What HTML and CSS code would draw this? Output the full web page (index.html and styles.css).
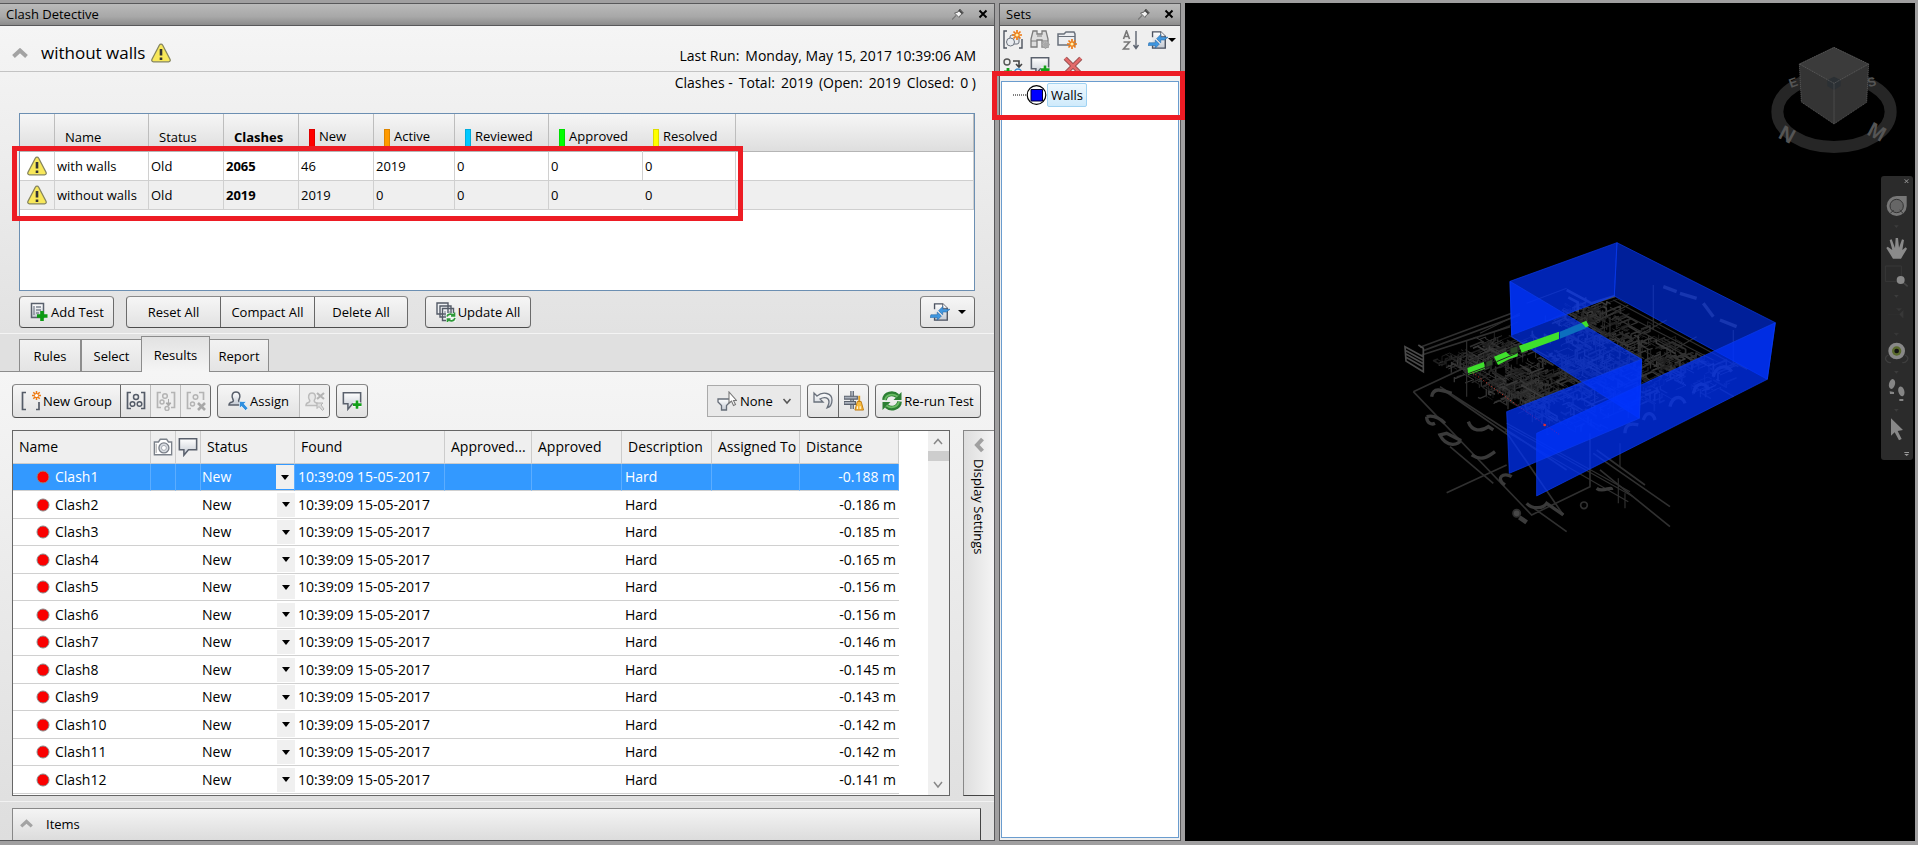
FILE: index.html
```
<!DOCTYPE html>
<html lang="en">
<head>
<meta charset="utf-8">
<title>Clash Detective</title>
<link rel="stylesheet" href="styles.css">
</head>
<body>
<svg class="defs" aria-hidden="true">
  <defs>
    <linearGradient id="steel" x1="0" y1="0" x2="0" y2="1"><stop offset="0" stop-color="#fff"/><stop offset="1" stop-color="#c3c9d2"/></linearGradient>
    <symbol id="warn" viewBox="0 0 20 20"><path d="M10 1.200c.8 0 1.300.4 1.700 1.100l7.300 14c.6 1.300 0 2.500-1.400 2.500H2.400C1 18.800.4 17.600 1 16.300l7.300-14C8.700 1.600 9.200 1.200 10 1.200z" fill="#f8e85a" stroke="#85855f" stroke-width="1.300"/><path d="M10 6v6.500M10 14.500v2.500" stroke="#333" stroke-width="2.600"/></symbol>
    <symbol id="pin" viewBox="0 0 12 12"><path d="M0 11.500l4-4" stroke="#777" stroke-width="1.200"/><path d="M2.500 5l4.500 4.500 1.500-2.500 3-2L8 1 6 4z" fill="#f2f2f2" stroke="#666"/><path d="M7 2l3.500 3.500" stroke="#444" stroke-width="1.800"/></symbol>
    <symbol id="close" viewBox="0 0 10 10"><path d="M1.500 1.500l7 7M8.500 1.500l-7 7" stroke="#000" stroke-width="1.900"/></symbol>
    <symbol id="up" viewBox="0 0 16 10"><path d="M1.500 8.500L8 2.500l6.500 6" fill="none" stroke="#a3a3a3" stroke-width="4"/></symbol>
    <symbol id="export" viewBox="0 0 22 22"><path d="M5 8V2h9l5 5v13H5v-3" fill="url(#steel)" stroke="#4b5260" stroke-width="1.500"/><path d="M14 2v5h5" fill="#fff" stroke="#4b5260"/><path d="M22 8h-8V5l-4.500 4.500L14 14v-3h4zM1 14h7v-3l4.500 4.500L8 20v-3H0z" fill="#3f97e0" stroke="#1c62a5" stroke-width=".6"/></symbol>
    <symbol id="addtest" viewBox="0 0 18 20"><path d="M1.500 1.500h12v14h-12z" fill="url(#steel)" stroke="#59606c" stroke-width="1.500"/><path d="M4 4v9M6 5h5M6 8h5M6 11h3" stroke="#7d8591" stroke-width="1.300"/><path d="M12 9v10M7 14h10.500" stroke="#0c9a12" stroke-width="3.600"/></symbol>
    <symbol id="updateall" viewBox="0 0 20 20"><path d="M1 1h11v11H1zM4 4h11v11H4zM6.500 6.500h11v12h-11z" fill="#eef0f3" stroke="#545b67" stroke-width="1.400"/><path d="M9 9v7M11 10h5" stroke="#7d8591"/><path d="M10 11h10v9H10z" fill="#f2f4f2"/><path d="M11 14.500c1-3 5-3 7-1M19 16c-1 3.500-5 3.500-7 1.500M18.500 10.500v3.500h-3.500M11.500 20v-3h3" fill="none" stroke="#2d9938" stroke-width="1.700"/></symbol>
    <symbol id="newgroup" viewBox="0 0 20 20"><path d="M5 1.500H1.500v17H5M15 18.500h3V11" fill="none" stroke="#555c68" stroke-width="1.700"/><path d="M15.500 0v9M11 4.500h9M12.300 1.300l6.400 6.400M18.700 1.300l-6.400 6.400" stroke="#ee7a12" stroke-width="1.500"/><circle cx="15.500" cy="4.500" r="1.600" fill="#fff"/></symbol>
    <symbol id="group" viewBox="0 0 20 20"><path d="M5 1.500H1.500v16H5M15 1.500h3.500v16H15" fill="none" stroke="#555c68" stroke-width="1.700"/><g fill="#eee" stroke="#555c68" stroke-width="1.500"><circle cx="10" cy="6" r="2.500"/><circle cx="6.500" cy="13" r="2.300"/><circle cx="13.500" cy="13" r="2.300"/></g></symbol>
    <symbol id="ungroup" viewBox="0 0 20 20"><path d="M5 1.500H1.500v15H5M15 1.500h3.500v15H15" fill="none" stroke="#b4b4b4" stroke-width="1.700"/><g fill="#eee" stroke="#b4b4b4" stroke-width="1.500"><circle cx="9" cy="5" r="2.300"/><circle cx="6" cy="11" r="2"/><circle cx="11" cy="17.500" r="2"/></g><path d="M12.500 8v5M10 12h5l-2.500 3z" fill="#aaa" stroke="#aaa"/></symbol>
    <symbol id="groupx" viewBox="0 0 20 20"><path d="M5 1.500H1.500v16H5M13 1.500h4.500V9" fill="none" stroke="#b4b4b4" stroke-width="1.700"/><g fill="#eee" stroke="#b4b4b4" stroke-width="1.500"><circle cx="9.500" cy="6" r="2.300"/><circle cx="6.500" cy="13" r="2"/></g><path d="M12 12l7 7M19 12l-7 7" stroke="#a8a8a8" stroke-width="2.600"/></symbol>
    <symbol id="assign" viewBox="0 0 20 20"><path d="M8 1c4.500 0 4.500 5 3 7.500-.7 1-.5 2 1 2.500 2 .5 3 1.500 3 3H1c0-2 1-2.500 3-3 1.500-.5 1.700-1.500 1-2.500C3.500 6 3.500 1 8 1z" fill="url(#steel)" stroke="#59606c" stroke-width="1.500"/><path d="M11.500 10.500h7l-2.500 2.300 4 4.500-2.500 2.300-4-4.300-2 2z" fill="#2f8fdf" stroke="#fff" stroke-width=".6"/></symbol>
    <symbol id="unassign" viewBox="0 0 20 20"><path d="M7 2c4 0 4 5 2.500 7-.7 1 0 2 1 2.500 2 .5 2.500 1 2.500 3H1c0-2 .5-2.500 2.500-3 1-.5 1.700-1.500 1-2.500C3 7 3 2 7 2z" fill="#e8e8e8" stroke="#bcbcbc" stroke-width="1.500"/><path d="M12 2l7 6M19 2l-7 6" stroke="#b4b4b4" stroke-width="2.200"/><path d="M12 12h6l-2 2 3 4-1.500 1.500-3.500-4-2 2z" fill="#ddd" stroke="#b4b4b4"/></symbol>
    <symbol id="comment" viewBox="0 0 22 22"><path d="M1.500 2h19v12h-9l-5 6v-6h-5z" fill="url(#steel)" stroke="#5a616d" stroke-width="1.700"/></symbol>
    <symbol id="commentadd" viewBox="0 0 22 22"><use href="#comment"/><path d="M16.500 10.500v9M12 15h9.500" stroke="#fff" stroke-width="4.500"/><path d="M16.500 10.500v9M12 15h9.500" stroke="#14a01a" stroke-width="3"/></symbol>
    <symbol id="camera" viewBox="0 0 22 20"><path d="M1.500 4.500H6L8 1.500h7l2 3h3.500v14h-19z" fill="#fff" stroke="#7b818a" stroke-width="1.500"/><path d="M3.500 6.500v10" stroke="#999"/><circle cx="12" cy="11" r="5.500" fill="#d8dce1" stroke="#7b818a" stroke-width="1.500"/><circle cx="12" cy="11" r="2.700" fill="#fff" stroke="#a0a5ac"/></symbol>
    <symbol id="funnel" viewBox="0 0 20 20"><path d="M1 8h12v3l-3.500 3.500V19h-5v-4.500L1 11z" fill="url(#steel)" stroke="#666d78" stroke-width="1.300"/><path d="M12 1v11l2.500-2 2 4.500 2-1-2-4h3z" fill="#fff" stroke="#777" stroke-width="1.100"/></symbol>
    <symbol id="undo" viewBox="0 0 20 20"><path d="M1 2v9h9L7 8c5-3 9-1 9 3 0 2-1 4-2 6 3-1 5-4 5-8C19 2 10 0 4 5z" fill="url(#steel)" stroke="#6a717c" stroke-width="1.300"/></symbol>
    <symbol id="compact" viewBox="0 0 21 21"><path d="M8.500 0v19" stroke="#6a717c" stroke-width="4"/><path d="M8.500 0v19" stroke="#b8bec8" stroke-width="1.500"/><path d="M0 5.500h14v3H0zM0 11h12v3H0z" fill="#aab1bc" stroke="#59606c" stroke-width="1.200"/><path d="M16 5v7" stroke="#dd9b22" stroke-width="2"/><path d="M14 11h4l2.500 9h-9z" fill="#f7ba3e" stroke="#c27c10"/><path d="M14 19v-3M17 19v-3" stroke="#fff"/></symbol>
    <symbol id="rerun" viewBox="0 0 20 20"><path d="M2.500 9C3 2.500 11 1 15.500 5M17.500 10.500C17 17 9 19 4.500 15" fill="none" stroke="#2d7f34" stroke-width="4.800"/><path d="M19.500 1v8h-8zM.5 19v-8h8z" fill="#2d7f34"/><path d="M3 9C4 3.500 11 2 15.500 5.500M17 10.500C16 16 9 18 4.500 14.500" fill="none" stroke="#69bb64" stroke-width="1.800"/></symbol>
    <symbol id="star" viewBox="0 0 10 10"><path d="M5 0v10M0 5h10M1.500 1.500l7 7M8.500 1.500l-7 7" stroke="#ee7a12" stroke-width="1.700"/><circle cx="5" cy="5" r="1.600" fill="#fff3b0"/></symbol>
    <symbol id="newset" viewBox="0 0 20 20"><path d="M4 1H1v17h3M16 18h3V9" fill="none" stroke="#4f5560" stroke-width="1.400"/><rect x="7" y="5" width="9" height="9" rx="2" fill="#e9ecf0" stroke="#6a717c"/><circle cx="7.500" cy="12" r="4" fill="#e9ecf0" stroke="#6a717c"/><use href="#star" x="9" y="0" width="10" height="10"/></symbol>
    <symbol id="find" viewBox="0 0 20 20"><path d="M3 1h4v3h5V1h4l2 8v8h-6v-7H7v7H1V9z" fill="#ddd" stroke="#7c7c7c" stroke-width="1.300"/><path d="M1 11h6M12 11h6M7 6h5" stroke="#7c7c7c"/><path d="M15.500 10v9M11 14.500h9M12.500 11.500l6 6M18.500 11.500l-6 6" stroke="#aaa" stroke-width="1.500"/></symbol>
    <symbol id="folder" viewBox="0 0 20 20"><path d="M1 4h6l2-2h8l1 2v11H1z" fill="#eceef1" stroke="#6a717c" stroke-width="1.500"/><path d="M1 6.500h17" stroke="#6a717c"/><use href="#star" x="10" y="9" width="10" height="10"/></symbol>
    <symbol id="dup" viewBox="0 0 20 16"><circle cx="4" cy="4" r="3" fill="#eee" stroke="#555" stroke-width="1.400"/><path d="M10 3h6v5M13 6l3 3 3-3" fill="none" stroke="#444" stroke-width="1.600"/><path d="M5 10v7M1 14h8" stroke="#14a01a" stroke-width="2.800"/><circle cx="15" cy="14.500" r="3.500" fill="#eee" stroke="#3d8fd0" stroke-width="1.500"/></symbol>
    <symbol id="del" viewBox="0 0 18 18"><path d="M2 2l14 14M16 2L2 16" stroke="#8e4747" stroke-width="4"/><path d="M2 2l14 14M16 2L2 16" stroke="#e26a6a" stroke-width="2.400"/></symbol>
    <symbol id="sort" viewBox="0 0 18 20"><path d="M1.500 9l3-8 3 8M2.500 6.500h4M1.500 12h6l-6 7h6" fill="none" stroke="#777" stroke-width="1.600"/><path d="M14 1v17M11.500 15l2.500 3.500 2.500-3.500" fill="none" stroke="#5d6470" stroke-width="1.400"/></symbol>
    <symbol id="dot" viewBox="0 0 14 14"><circle cx="7" cy="7" r="6" fill="#fa0000" stroke="#888" stroke-width="1"/></symbol>
  </defs>
</svg>

<main class="app">
  <section class="panel clash">
    <header class="title"><h1>Clash Detective</h1><button aria-label="Pin"><svg class="i12"><use href="#pin"/></svg></button><button aria-label="Close"><svg class="i10"><use href="#close"/></svg></button></header>

    <div class="upper">
      <div class="test-head">
        <button class="fold" aria-label="Collapse"><svg class="chev"><use href="#up"/></svg></button>
        <h2>without walls</h2><svg class="i20"><use href="#warn"/></svg>
        <p class="last-run"><span>Last Run:</span><span>Monday, May 15, 2017 10:39:06 AM</span></p>
      </div>
      <p class="totals"><span>Clashes -</span><span>Total:</span><span>2019</span><span>(Open:</span><span>2019</span><span>Closed:</span><span>0 )</span></p>

      <div class="tests">
        <table>
          <colgroup><col class="c35"><col class="c94"><col class="c75"><col class="c75"><col class="c75"><col class="c81"><col class="c94"><col class="c94"><col class="c93"><col></colgroup>
          <thead><tr><th></th><th>Name</th><th>Status</th><th><b>Clashes</b></th><th><i class="sw red"></i>New</th><th><i class="sw orange"></i>Active</th><th><i class="sw cyan"></i>Reviewed</th><th class="open"><i class="sw green"></i>Approved</th><th><i class="sw yellow"></i>Resolved</th><th></th></tr></thead>
          <tbody>
            <tr><td><svg class="i20"><use href="#warn"/></svg></td><td>with walls</td><td>Old</td><td><b>2065</b></td><td>46</td><td>2019</td><td>0</td><td>0</td><td>0</td><td></td></tr>
            <tr><td><svg class="i20"><use href="#warn"/></svg></td><td>without walls</td><td>Old</td><td><b>2019</b></td><td>2019</td><td>0</td><td>0</td><td class="open">0</td><td>0</td><td></td></tr>
          </tbody>
        </table>
        <div class="mark mark-tests"></div>
      </div>

      <div class="actions">
        <div class="seg"><button class="w93"><svg class="i20"><use href="#addtest"/></svg>Add Test</button></div>
        <div class="seg"><button class="w93">Reset All</button><button class="w94">Compact All</button><button class="w93">Delete All</button></div>
        <div class="seg after"><button class="w104"><svg class="i20"><use href="#updateall"/></svg>Update All</button></div>
        <div class="seg end"><button class="w53" aria-label="Import or export"><svg class="i20"><use href="#export"/></svg><i class="tri"></i></button></div>
      </div>
    </div>

    <nav class="tabs"><button class="w62">Rules</button><button class="w61">Select</button><button class="w69 on">Results</button><button class="w60">Report</button></nav>

    <div class="lower">
      <div class="tools">
        <div class="seg"><button class="w107"><svg class="i20"><use href="#newgroup"/></svg>New Group</button><button class="w30" aria-label="Group"><svg class="i20"><use href="#group"/></svg></button><button class="w30" disabled aria-label="Remove from group"><svg class="i20"><use href="#ungroup"/></svg></button><button class="w30" disabled aria-label="Explode group"><svg class="i20"><use href="#groupx"/></svg></button></div>
        <div class="seg"><button class="w81"><svg class="i20"><use href="#assign"/></svg>Assign</button><button class="w30" disabled aria-label="Unassign"><svg class="i20"><use href="#unassign"/></svg></button></div>
        <div class="seg"><button class="w30" aria-label="Add comment"><svg class="i20"><use href="#commentadd"/></svg></button></div>
        <label class="combo"><svg class="i20"><use href="#funnel"/></svg><select aria-label="Filter by selection"><option>None</option></select><svg class="i10" viewBox="0 0 10 10"><path d="M1.500 3L5 7l3.500-4" fill="none" stroke="#555" stroke-width="1.500"/></svg></label>
        <div class="seg"><button class="w30" aria-label="Reset"><svg class="i20"><use href="#undo"/></svg></button><button class="w30" aria-label="Compact"><svg class="i20"><use href="#compact"/></svg></button></div>
        <div class="seg"><button class="w104"><svg class="i20"><use href="#rerun"/></svg>Re-run Test</button></div>
      </div>

      <div class="results">
        <div class="grid">
          <table>
            <colgroup><col class="c138"><col class="c25"><col class="c25"><col class="c94"><col class="c150"><col class="c87"><col class="c90"><col class="c90"><col class="c88"><col class="c99"></colgroup>
            <thead><tr><th>Name</th><th class="ic"><svg class="i20"><use href="#camera"/></svg></th><th class="ic"><svg class="i20"><use href="#comment"/></svg></th><th>Status</th><th>Found</th><th>Approved...</th><th>Approved</th><th>Description</th><th>Assigned To</th><th>Distance</th></tr></thead>
            <tbody id="rows"></tbody>
          </table>
          <div class="scroll"><svg class="i20" viewBox="0 0 20 20"><path d="M6 13l4-4.500 4 4.500" fill="none" stroke="#888" stroke-width="1.500"/></svg><i></i><svg class="i20 down" viewBox="0 0 20 20"><path d="M6 7l4 5 4-5" fill="none" stroke="#888" stroke-width="1.500"/></svg></div>
        </div>
        <button class="display"><svg class="left" viewBox="0 0 10 16"><path d="M8.500 2L3 8l5.500 6" fill="none" stroke="#a0a0a0" stroke-width="4"/></svg><span>Display Settings</span></button>
      </div>
      <hr>
      <button class="items"><svg class="chev12"><use href="#up"/></svg>Items</button>
    </div>
  </section>

  <section class="panel sets">
    <header class="title"><h1>Sets</h1><button aria-label="Pin"><svg class="i12"><use href="#pin"/></svg></button><button aria-label="Close"><svg class="i10"><use href="#close"/></svg></button></header>
    <div class="set-tools">
      <button aria-label="Save selection"><svg class="i20"><use href="#newset"/></svg></button><button aria-label="Save search"><svg class="i20"><use href="#find"/></svg></button><button aria-label="New folder"><svg class="i20"><use href="#folder"/></svg></button><button class="push" aria-label="Sort"><svg class="i20"><use href="#sort"/></svg></button><button aria-label="Import or export"><svg class="i20"><use href="#export"/></svg><i class="tri"></i></button>
    </div>
    <div class="set-tools second">
      <button aria-label="Duplicate"><svg class="i20"><use href="#dup"/></svg></button><button aria-label="Add comment"><svg class="i20"><use href="#commentadd"/></svg></button><button class="gap" aria-label="Delete"><svg class="i20"><use href="#del"/></svg></button>
    </div>
    <div class="tree"><button class="node"><svg class="leaf" viewBox="0 0 34 20"><path d="M0 10h14" stroke="#000" stroke-dasharray="1 1"/><circle cx="23.500" cy="10" r="9.300" fill="#fff" stroke="#000" stroke-width="1.200"/><path d="M18 4.500h11.500v11.500H18z" fill="#00f" stroke="#003"/></svg><span>Walls</span></button></div>
    <div class="mark mark-sets"></div>
  </section>

  <section class="view">
    <svg class="scene" viewBox="0 0 730 838" preserveAspectRatio="xMidYMin meet">
      <g transform="translate(195 217) scale(.3333)">
        <g id="pipes" fill="none" stroke-linejoin="round"></g>
        <g fill="none" stroke="#303030" stroke-width="5">
          <path d="M100 515L260 440M100 515L455 885L630 800V640M120 382L395 280M130 392L420 285M125 405L390 320M200 818L380 735M455 860L560 935M640 700L870 860M660 750L870 920M650 690L795 795M210 680L340 790M180 500L380 630L560 750M190 510L385 645L550 885" />
          <path d="M385 620L760 830M375 632L745 845M380 610L750 815M260 360V530M455 460V510M820 195V330M690 290V360M720 670V740M715 775V850M735 820V865M300 340L420 280M440 250L560 205M700 240L1075 440M690 262L1000 420M700 290L960 430M745 255L600 330M860 300L640 420M950 350L790 440M1060 330V440" stroke-width="3.500"/>
          <path d="M75 380l55 30v45l-52-32zM78 392l50 28M78 402l50 28M78 412l50 28M115 375l15 10v30" stroke="#4a4a4a"/>
          <path d="M560 210l75 40 70-22M565 232l28 15v30" stroke="#454545" stroke-width="8"/>
          <path d="M155 530c5-30 30-20 60-10M140 590c0 20 15 25 25 20M140 590c20-5 40 5 55 20M180 645c20 40 60 30 60 15l-40-20zM265 605c10 30 40 30 60 15l15 10M275 705c30 20 50 5 70-10M375 795c-30-20-5-40 20-25M440 850c20 20 50 15 60 0l50 35M650 805c20 15 45-10 45 5M735 640c0-30 20-30 40-25M790 600c10-30 30-20 35 0M870 560c10-40 40-30 45-10M940 520c10-40 40-30 45-10M1000 470c5-30 40-40 55-15M850 200l40 15M900 220l50 15M970 250l30 40M1020 300l50 20" stroke="#3a3a3a" stroke-width="10"/>
          <circle cx="410" cy="880" r="11" fill="#484848"/><circle cx="612" cy="856" r="10"/><path d="M418 892l22 15" stroke-width="14" stroke="#3c3c3c"/>
        </g>
        <path d="M540 335l65-27 20 14-85 34z" fill="#23e040"/>
        <g fill="#03f" stroke="#0a3cf0" stroke-width="2">
          <path d="M390 184L711 68L703 228L395 345z" fill-opacity=".7"/>
          <path d="M711 68L1186 308L1162 478L703 228z" fill-opacity=".6"/>
          <path d="M390 184L785 418L778 595L395 350z" fill-opacity=".66"/>
          <path d="M1186 308L1162 478L470 828V640z" fill-opacity=".73"/>
          <path d="M785 418L778 595L388 760L380 575z" fill-opacity=".72"/>
        </g>
        <path d="M417 377l120-42v22l-112 41zM342 410l36-15 10 10 25-8v12l-25 8-34 18zM262 444l50-18 3 20-50 18zM605 308l14-6 8 16-10 4z" fill="#3ee02c"/>
        <path d="M262 462l54-20M350 425l60-25M318 425l20-8v18l-20 8zM390 385l24-8v20l-24 6z" fill="#2c4a28" stroke="#222" stroke-width="3"/>
        <path d="M278 458L410 555" stroke="#e0382a" stroke-width="3" stroke-dasharray="3 7"/><path d="M410 555L540 645" stroke="#8020a0" stroke-width="2" stroke-dasharray="3 5"/><circle cx="494" cy="615" r="4" fill="#e03030"/>
      </g>
    </svg>
    <svg class="cube" viewBox="90 45 390 330">
      <ellipse cx="282" cy="245" rx="170" ry="106" fill="none" stroke="#262626" stroke-width="36"/>
      <g fill="#555" font-family="Liberation Sans" font-weight="bold" font-size="62"><text transform="translate(112 322) rotate(28)">N</text><text transform="translate(378 312) rotate(28)">M</text><text transform="translate(152 174) rotate(-20)" font-size="38">E</text><text transform="translate(386 172) rotate(-15)" font-size="38">S</text></g>
      <path d="M282 52l104 50-6 115-98 65-98-66-6-114z" fill="#343434"/><path d="M282 52l104 50-104 58-104-58z" fill="#3b3b3b"/><path d="M262 150l20-10 20 10v18l-20 12-20-12z" fill="#2b3034"/>
      <path d="M282 52l104 50-104 58-104-58zM282 160v122M178 102l6 114 98 66 98-65 6-115" fill="none" stroke="#666" stroke-width="2" stroke-dasharray="4 2"/>
    </svg>
    <nav class="navbar">
      <button aria-label="Close bar"><svg viewBox="64 18 96 36"><path d="M135 28l11 11M146 28l-11 11" stroke="#999" stroke-width="3"/></svg></button>
      <button aria-label="Steering wheel"><svg viewBox="64 54 96 132"><path d="M111 78h30v30a30 30 0 1 1-30-30z" fill="#777"/><circle cx="111" cy="108" r="20" fill="#666" stroke="#333" stroke-width="3"/><path d="M92 130l10-10M130 130l-10-10" stroke="#333" stroke-width="3"/><path d="M103 166h14l-7 8z" fill="#3c3c3c"/></svg></button>
      <button aria-label="Pan"><svg viewBox="64 186 96 90"><path d="M100 266L80 234l4-4 14 10-8-30 6-2 10 26 2-30h7l3 29 9-25 6 2-5 30 10-8 4 4-18 30z" fill="#8a8a8a"/></svg></button>
      <button aria-label="Zoom"><svg viewBox="64 276 96 120"><path d="M77 288h48v46H77z" fill="none" stroke="#383838" stroke-width="3"/><path d="M130 337l14 12" stroke="#444" stroke-width="5"/><circle cx="123" cy="330" r="12" fill="#888"/><path d="M103 375h14l-7 8z" fill="#3c3c3c"/></svg></button>
      <button aria-label="Orbit"><svg viewBox="64 396 96 114"><path d="M85 433h34l12-12v24l-12-12M110 415h16l-8 9zM103 489h14l-7 8z" fill="#383838" stroke="#383838"/></svg></button>
      <button aria-label="Look"><svg viewBox="64 510 96 108"><path d="M86 555c-20 10 0 25 8 22M136 555c20 10 0 25-8 22" fill="none" stroke="#3e3e3e" stroke-width="4"/><circle cx="111" cy="543" r="25" fill="#888"/><circle cx="111" cy="543" r="14" fill="#59692c"/><circle cx="111" cy="543" r="7" fill="#111"/><path d="M103 603h14l-7 8z" fill="#3c3c3c"/></svg></button>
      <button aria-label="Walk"><svg viewBox="64 618 96 114"><g fill="#858585"><ellipse cx="97" cy="642" rx="9" ry="15" transform="rotate(15 97 642)"/><ellipse cx="125" cy="664" rx="9" ry="15" transform="rotate(-15 125 664)"/><path d="M90 664l13 2v6H91zM119 687h12v6h-12z"/></g><path d="M103 717h14l-7 8z" fill="#3c3c3c"/></svg></button>
      <button aria-label="Select"><svg viewBox="64 732 96 90"><path d="M94 745v52l11-10 13 24 8-4-12-24 16-3z" fill="#888"/></svg></button>
      <button aria-label="Customize"><svg viewBox="64 822 96 48"><path d="M134 846h14v3h-14zM134 852h14l-7 6z" fill="#999"/></svg></button>
    </nav>
  </section>
</main>
<script src="app.js"></script>
</body>
</html>
```
FILE: styles.css
```
* { box-sizing: border-box; }
body { margin: 0; background: #a09fa0; color: #000; font-family: "Open Sans", "Noto Sans", sans-serif; font-size: 13px; line-height: 20px; }
h1, h2, p { margin: 0; font-weight: normal; }
button, select { font: inherit; color: inherit; margin: 0; padding: 0; border: 0; background: none; }
svg { display: block; flex: none; }
.defs { position: absolute; width: 0; height: 0; }
.i10 { width: 10px; height: 10px; }
.i12 { width: 12px; height: 12px; }
.i20 { width: 20px; height: 20px; }

.app { display: grid; grid-template-columns: 995fr 182fr 730fr; gap: 4px; min-height: 100vh; padding: 3px 3px 4px 0; }
.panel { position: relative; display: flex; flex-direction: column; min-width: 0; border: 1px solid #58585a; background: #efefef; }
.clash { border-left: 0; }
.title { display: flex; align-items: center; gap: 14px; height: 22px; padding: 0 6px 2px; border-bottom: 1px solid #58585a; background: linear-gradient(#bababa, #a8a8a8 60%, #8c8c8c); }
.title h1 { flex: 1; font-size: 13px; }

.upper { background: linear-gradient(#f5f5f5, #e2e2e2); border-bottom: 1px solid #f4f4f4; padding-bottom: 5px; }
.test-head { display: flex; align-items: center; height: 46px; padding: 8px 18px 0 12px; border-bottom: 1px solid #c3c3c3; }
.fold { margin-right: 13px; }
.chev { width: 16px; height: 10px; }
.test-head h2 { font-size: 17px; margin-right: 6px; }
.last-run { margin-left: auto; padding-top: 7px; }
.last-run, .totals { display: flex; gap: 6px; font-size: 14px; }
.totals { justify-content: flex-end; padding: 1px 18px 0 0; height: 41px; }

.tests { position: relative; height: 178px; margin: 0 19px 5px 19px; border: 1px solid #6c8fb2; background: #fff; }
table { border-collapse: separate; border-spacing: 0; table-layout: fixed; }
th, td { padding: 0; font-weight: normal; text-align: left; white-space: nowrap; overflow: hidden; }
.c25 { width: 25px; } .c35 { width: 35px; } .c75 { width: 75px; } .c81 { width: 81px; } .c87 { width: 87px; } .c88 { width: 88px; } .c90 { width: 90px; }
.c93 { width: 93px; } .c94 { width: 94px; } .c99 { width: 99px; } .c138 { width: 138px; } .c150 { width: 150px; }
.tests table { width: 100%; }
.tests th { height: 38px; padding: 8px 0 0 10px; border-right: 1px solid #bdbdbd; border-bottom: 1px solid #b5b5b5; background: linear-gradient(#f6f6f6, #dedede); }
.tests td { height: 29px; padding-left: 2px; border-right: 1px solid #d0d0d0; border-bottom: 1px solid #cfcfcf; }
.tests td:first-child { padding-left: 7px; }
.tests tr > .open { border-right-color: transparent; }
.tests tbody tr:nth-child(2) td { background: #efefef; }
.sw { display: inline-block; width: 6px; height: 18px; margin-right: 4px; vertical-align: middle; border: 1px solid #0002; }
.red { background: #f00; } .orange { background: #ff9a00; } .cyan { background: #00c8ff; } .green { background: #0f0; } .yellow { background: #ff0; }

.mark { position: absolute; border: 5px solid #ed1c24; pointer-events: none; }
.mark-tests { left: -8px; top: 32px; width: 731px; height: 75px; }
.mark-sets { left: -8px; right: -5px; top: 67px; height: 49px; }

.actions { display: flex; gap: 12px; padding: 0 19px; }
.after { margin-left: 5px; }
.end { margin-left: auto; }
.seg { display: flex; height: 32px; border: 1px solid #8a8a8a; border-color: #8a8a8a #6b6b6b #4c4c4c; border-radius: 4px; background: linear-gradient(#f6f6f6, #e2e2e2); overflow: hidden; }
.seg button { display: flex; align-items: center; justify-content: center; gap: 2px; white-space: nowrap; }
.seg button + button { border-left: 1px solid #666; }
.seg button:disabled { background: #eee; border-color: #bbb; }
.tri { width: 0; height: 0; border: 4px solid transparent; border-top-color: #000; border-bottom: 0; }
.w53 .tri { margin-left: 6px; }
.w30 { width: 30px; } .w53 { width: 53px; } .w81 { width: 81px; } .w93 { width: 93px; } .w94 { width: 94px; } .w104 { width: 104px; } .w107 { width: 107px; }

.tabs { display: flex; align-items: flex-end; height: 38px; padding-left: 19px; background: #e0e0e0; border-bottom: 1px solid #8c8c8c; }
.tabs button { height: 32px; border: 1px solid #8c8c8c; border-bottom: 0; background: linear-gradient(#f2f2f2, #e4e4e4); }
.tabs .on { height: 36px; margin: 0 -1px -1px; background: linear-gradient(#e2e2e2, #f5f5f5); z-index: 1; }
.w60 { width: 60px; } .w61 { width: 61px; } .w62 { width: 62px; } .w69 { width: 69px; }

.lower { flex: 1; display: flex; flex-direction: column; padding-top: 12px; background: linear-gradient(#f5f5f5, #dedede); }
.tools { display: flex; align-items: center; gap: 6px; padding: 0 13px 0 12px; }
.tools .seg { height: 34px; }
.combo { display: flex; align-items: center; width: 94px; height: 32px; margin-left: auto; padding: 0 8px 0 9px; border: 1px solid #aaa; background: #e9e9e9; }
.combo select { flex: 1; min-width: 0; padding-left: 3px; appearance: none; }

.results { flex: 1; display: flex; margin: 12px 0 5px 12px; }
.grid { flex: 1; display: flex; justify-content: space-between; border: 1px solid #666; background: #fff; font-size: 14px; }
.grid table { width: 886px; height: 0; }
.grid th { height: 33px; padding-left: 6px; border-right: 1px solid #ccc; border-bottom: 1px solid #ccc; background: #efefef; }
.grid th.ic { padding-left: 2px; }
.grid td { height: 27px; border-bottom: 1px solid #d0d0d0; }
.grid tr:nth-child(even) td { height: 28px; }
.grid .sel td { background: #3399ff; color: #fff; border-right: 1px solid #5cadff; }
.name { display: flex; align-items: center; gap: 5px; padding-left: 23px; }
.dot { width: 14px; height: 14px; }
.stat { display: flex; align-items: center; }
.stat select { flex: 1; min-width: 0; padding-left: 1px; appearance: none; }
.stat i { display: flex; align-items: center; justify-content: center; width: 18px; height: 24px; background: #f0f0f0; }
.stat i::after { content: ""; border: 4px solid transparent; border-top: 5px solid #000; border-bottom: 0; }
.grid td.found { padding-left: 3px; }
.grid td.desc { padding-left: 3px; }
.grid td.dist { padding-right: 3px; text-align: right; }
.scroll { display: flex; flex-direction: column; width: 21px; background: #f0f0f0; }
.scroll i { height: 10px; background: #cdcdcd; }
.down { margin-top: auto; }
.display { display: flex; flex-direction: column; align-items: center; gap: 6px; width: 31px; margin-left: 13px; padding-top: 6px; border: 1px solid #888; border-right: 0; border-bottom-color: #444; background: linear-gradient(90deg, #dedede, #f4f4f4); }
.display span { writing-mode: vertical-rl; font-size: 13px; }
.left { width: 10px; height: 16px; }
hr { width: 100%; margin: 0 0 6px; border: 0; border-top: 1px solid #f2f2f2; }
.items { display: flex; align-items: center; gap: 13px; height: 32px; margin: 0 13px 0 12px; padding: 0 0 2px 7px; border: 1px solid #888; border-right-color: #444; border-bottom: 0; background: linear-gradient(#f4f4f4, #dcdcdc); }
.chev12 { width: 13px; height: 9px; }

.set-tools { display: flex; align-items: center; gap: 7px; height: 28px; padding: 0 4px 0 3px; }
.set-tools.second { height: 27px; align-items: flex-start; padding-top: 2px; }
.set-tools button { display: flex; align-items: center; }
.push { margin-left: auto; }
.gap { margin-left: 6px; }
.tree { flex: 1; margin: 0 1px 2px; padding: 1px 0 0 11px; border: 1px solid #6a9cce; background: #fff; }
.node { display: flex; align-items: center; }
.leaf { width: 34px; height: 20px; }
.node span { padding: 1px 3px; border: 1px solid #9fd2f2; border-radius: 2px; background: linear-gradient(#eef8fe, #cfeafb); }

.view { position: relative; background: #000; overflow: hidden; }
.scene { width: 100%; }
.cube { position: absolute; right: 15px; top: 42px; width: 130px; height: 110px; }
.navbar { position: absolute; right: 2px; top: 173px; width: 32px; border-radius: 3px; background: #2b2b2b; }
.navbar button { display: block; width: 100%; }
.navbar svg { width: 100%; }
```
FILE: app.js
```
const distances = [188, 186, 185, 165, 156, 156, 146, 145, 143, 142, 142, 141];
document.getElementById("rows").innerHTML = distances.map((d, i) => `
  <tr class="${i ? "" : "sel"}">
    <td><div class="name"><svg class="dot"><use href="#dot"/></svg>Clash${i + 1}</div></td><td></td><td></td>
    <td><div class="stat"><select aria-label="Status of Clash${i + 1}"><option>New</option></select><i></i></div></td>
    <td class="found">10:39:09 15-05-2017</td><td></td><td></td><td class="desc">Hard</td><td></td><td class="dist">-0.${d} m</td>
  </tr>`).join("");

// Service runs of the model: short right-angled pipe routes along the building axes.
let seed = 7;
const rnd = () => (seed = (seed * 16807) % 2147483647) / 2147483647;
const axes = [[0.92, -0.38], [0.87, 0.49], [0, 0.6]];
const zones = [
  { n: 260, o: [200, 450], u: 480, v: 330 },
  { n: 220, o: [310, 490], u: 330, v: 300 },
  { n: 200, o: [540, 300], u: 140, v: 480 },
  { n: 140, o: [170, 420], u: 200, v: 90 },
  { n: 110, o: [300, 500], u: 150, v: 140 },
  { n: 60, o: [520, 280], u: 90, v: 90 }
];
let out = "";
for (const z of zones) {
  for (let i = 0; i < z.n; i++) {
    const a = rnd() * z.u, b = rnd() * z.v;
    let x = z.o[0] + a * 0.92 + b * 0.87, y = z.o[1] - a * 0.38 + b * 0.49;
    let d = `M${x | 0} ${y | 0}`;
    const steps = 2 + (rnd() * 3 | 0);
    for (let s = 0; s < steps; s++) {
      const k = axes[rnd() * 3 | 0], len = (rnd() - 0.4) * 80;
      x += k[0] * len; y += k[1] * len;
      d += `L${x | 0} ${y | 0}`;
    }
    const g = 30 + (rnd() * 30 | 0);
    out += `<path d="${d}" stroke="rgb(${g},${g},${g})" stroke-width="${2 + (rnd() * 4 | 0)}"/>`;
  }
}
document.getElementById("pipes").innerHTML = out;
```
